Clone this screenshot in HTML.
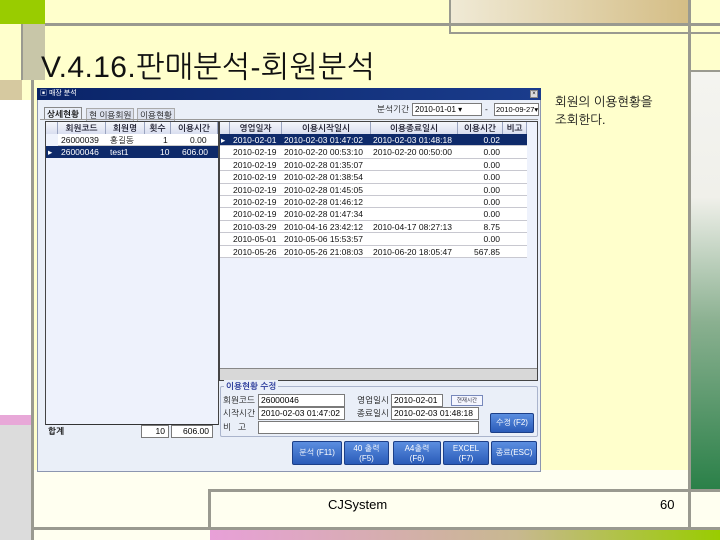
<!DOCTYPE html>
<html><head><meta charset="utf-8"><style>
*{margin:0;padding:0;box-sizing:border-box}
body{width:720px;height:540px;position:relative;overflow:hidden;background:#ffffcc;font-family:"Liberation Sans","Noto Sans CJK KR",sans-serif}
.a{position:absolute}
.k{font-family:"Liberation Sans","NanumGothic","Noto Sans CJK KR",sans-serif}
.t{font-size:8.5px;white-space:nowrap;line-height:12px;color:#111}
.hd{background:linear-gradient(#f4f6fc,#d9def0);border-right:1px solid #9aa4c0;text-align:center;font-weight:bold;color:#223}
.btn{position:absolute;top:441px;height:24px;background:linear-gradient(#5b8ee0,#2a5bb8);border:1px solid #1c3f88;border-radius:2px;color:#fff;font-size:8px;text-align:center;line-height:10px;padding-top:2px}
.inp{position:absolute;background:#fff;border:1px solid #7a7a7a;font-size:8.5px;line-height:11px;padding-left:2px;height:13px;white-space:nowrap;overflow:hidden}
</style></head><body>
<div class="a" style="left:0;top:0;width:720px;height:24px;background:#ffffcc"></div>
<div class="a" style="left:0;top:0;width:45px;height:24px;background:#99cc00"></div>
<div class="a" style="left:450px;top:0;width:240px;height:24px;background:linear-gradient(90deg,#f0ead6,#d4bd85)"></div>
<div class="a" style="left:22px;top:24px;width:23px;height:56px;background:#c8c6a8"></div>
<div class="a" style="left:0;top:80px;width:22px;height:20px;background:#d6c9a0"></div>
<div class="a" style="left:45px;top:23px;width:675px;height:3px;background:#9a9a90"></div>
<div class="a" style="left:449px;top:0;width:2px;height:34px;background:#9a9a90"></div>
<div class="a" style="left:450px;top:32px;width:270px;height:2px;background:#9a9a90"></div>
<div class="a" style="left:21px;top:24px;width:2px;height:56px;background:#9a9a90"></div>
<div class="a" style="left:0;top:100px;width:31px;height:315px;background:#fff"></div>
<div class="a" style="left:0;top:415px;width:31px;height:10px;background:#e8a8d8"></div>
<div class="a" style="left:0;top:425px;width:31px;height:115px;background:#dcdcdc"></div>
<div class="a" style="left:31px;top:80px;width:3px;height:460px;background:#9a9a90"></div>
<div class="a" style="left:688px;top:0;width:3px;height:540px;background:#9a9a90"></div>
<div class="a" style="left:691px;top:72px;width:29px;height:418px;background:linear-gradient(#f4f4f0 0%,#f0f0ea 30%,#8ab090 60%,#2a8048 100%)"></div>
<div class="a" style="left:691px;top:70px;width:29px;height:2px;background:#9a9a90"></div>
<div class="a" style="left:34px;top:470px;width:654px;height:60px;background:#fffff0"></div>
<div class="a" style="left:691px;top:490px;width:29px;height:40px;background:#fffff0"></div>
<div class="a" style="left:209px;top:489px;width:511px;height:3px;background:#9a9a90"></div>
<div class="a" style="left:208px;top:489px;width:3px;height:40px;background:#9a9a90"></div>
<div class="a" style="left:34px;top:527px;width:686px;height:3px;background:#9a9a90"></div>
<div class="a" style="left:210px;top:530px;width:510px;height:10px;background:linear-gradient(90deg,#e8a0d8,#c8b890 60%,#99cc00)"></div>
<div class="a" style="left:34px;top:530px;width:176px;height:10px;background:#fffff0"></div>
<div class="a" style="left:328px;top:497px;font-size:13px">CJSystem</div>
<div class="a" style="left:660px;top:497px;font-size:13px">60</div>
<div class="a k" style="left:41px;top:51px;font-size:30px;line-height:34px;color:#111;letter-spacing:0.4px">V.4.16.판매분석-회원분석</div>
<div class="a k" style="left:555px;top:93px;font-size:12.5px;line-height:18px;color:#111">회원의 이용현황을<br>조회한다.</div>
<div class="a" style="left:37px;top:88px;width:504px;height:384px;background:#eaeff8;border:1px solid #8c96b0"></div>
<div class="a" style="left:37px;top:88px;width:504px;height:12px;background:linear-gradient(90deg,#0a2468,#1a3c8c)"></div>
<div class="a t" style="left:40px;top:88px;color:#fff;font-size:7px;line-height:12px">▣ 매장 분석</div>
<div class="a" style="left:530px;top:90px;width:8px;height:8px;background:#ddd;border:1px solid #888;font-size:6px;line-height:6px;text-align:center">×</div>
<div class="a t k" style="left:44px;top:107px;font-weight:bold;background:#eaeff8;border:1px solid #888;border-bottom:none;padding:0 2px">상세현황</div>
<div class="a t k" style="left:86px;top:108px;background:#dde2ee;border:1px solid #aaa;padding:0 2px">현 이용회원</div>
<div class="a t k" style="left:137px;top:108px;background:#dde2ee;border:1px solid #aaa;padding:0 2px">이용현황</div>
<div class="a" style="left:40px;top:119px;width:498px;height:1px;background:#999"></div>
<div class="a t k" style="left:377px;top:103px">분석기간</div>
<div class="inp" style="left:412px;top:103px;width:70px;font-size:8px">2010-01-01 ▾</div>
<div class="a t" style="left:485px;top:103px">-</div>
<div class="inp" style="left:494px;top:103px;width:45px;font-size:7.5px;padding-left:1px">2010-09-27▾</div>
<div class="a" style="left:45px;top:121px;width:174px;height:304px;background:#eef2fc;border:1px solid #444"></div>
<div class="a t k hd" style="left:46px;top:122px;width:12px;height:12px"></div>
<div class="a t k hd" style="left:58px;top:122px;width:48px;height:12px">회원코드</div>
<div class="a t k hd" style="left:106px;top:122px;width:39px;height:12px">회원명</div>
<div class="a t k hd" style="left:145px;top:122px;width:26px;height:12px">횟수</div>
<div class="a t k hd" style="left:171px;top:122px;width:47px;height:12px">이용시간</div>
<div class="a" style="left:58px;top:134px;width:160px;height:12px;background:#fff;border-bottom:1px solid #ccc"></div>
<div class="a t k" style="left:61px;top:134px">26000039</div><div class="a t k" style="left:110px;top:134px">홍길동</div><div class="a t" style="left:163px;top:134px">1</div><div class="a t" style="left:190px;top:134px">0.00</div>
<div class="a" style="left:46px;top:146px;width:172px;height:12px;background:#0e2a6a"></div>
<div class="a t" style="left:48px;top:146px;color:#fff">▸</div><div class="a t" style="left:61px;top:146px;color:#fff">26000046</div><div class="a t" style="left:110px;top:146px;color:#fff">test1</div><div class="a t" style="left:160px;top:146px;color:#fff">10</div><div class="a t" style="left:182px;top:146px;color:#fff">606.00</div>
<div class="a" style="left:46px;top:424px;width:172px;height:1px;background:#333"></div>
<div class="a t k" style="left:48px;top:425px;font-weight:bold">합계</div>
<div class="inp" style="left:141px;top:425px;width:28px;text-align:right;padding-right:3px">10</div>
<div class="inp" style="left:171px;top:425px;width:42px;text-align:right;padding-right:3px">606.00</div>
<div class="a" style="left:219px;top:121px;width:319px;height:260px;background:#eef2fc;border:1px solid #444"></div>
<div class="a t k hd" style="left:220px;top:122px;width:10px;height:12px"></div>
<div class="a t k hd" style="left:230px;top:122px;width:52px;height:12px">영업일자</div>
<div class="a t k hd" style="left:282px;top:122px;width:89px;height:12px">이용시작일시</div>
<div class="a t k hd" style="left:371px;top:122px;width:87px;height:12px">이용종료일시</div>
<div class="a t k hd" style="left:458px;top:122px;width:45px;height:12px">이용시간</div>
<div class="a t k hd" style="left:503px;top:122px;width:24px;height:12px">비고</div>
<div id="rows"></div>
<div class="a" style="left:220px;top:368px;width:317px;height:12px;background:#d8d8d8;border-top:1px solid #888"></div>
<div class="a" style="left:220px;top:386px;width:318px;height:51px;border:1px solid #aab4cc;border-radius:2px"></div>
<div class="a t k" style="left:224px;top:380px;background:#eaeff8;color:#2a3a9a;font-weight:bold;padding:0 2px">이용현황 수정</div>
<div class="a t k" style="left:223px;top:394px">회원코드</div>
<div class="inp" style="left:258px;top:394px;width:87px">26000046</div>
<div class="a t k" style="left:357px;top:394px">영업일시</div>
<div class="inp" style="left:391px;top:394px;width:52px">2010-02-01</div>
<div class="a" style="left:451px;top:395px;width:32px;height:11px;border:1px solid #7788bb;background:#f4f6ff;font-size:5.5px;text-align:center;line-height:10px;color:#334">현재시간</div>
<div class="a t k" style="left:223px;top:407px">시작시간</div>
<div class="inp" style="left:258px;top:407px;width:87px">2010-02-03 01:47:02</div>
<div class="a t k" style="left:357px;top:407px">종료일시</div>
<div class="inp" style="left:391px;top:407px;width:88px">2010-02-03 01:48:18</div>
<div class="a t k" style="left:223px;top:421px">비&nbsp;&nbsp;&nbsp;고</div>
<div class="inp" style="left:258px;top:421px;width:221px"></div>
<div class="btn k" style="left:490px;top:413px;width:44px;height:20px;line-height:14px">수정 (F2)</div>
<div class="btn k" style="left:292px;width:50px;line-height:18px">분석 (F11)</div>
<div class="btn k" style="left:344px;width:45px">40 출력<br>(F5)</div>
<div class="btn k" style="left:393px;width:48px">A4출력<br>(F6)</div>
<div class="btn k" style="left:443px;width:46px">EXCEL<br>(F7)</div>
<div class="btn k" style="left:491px;width:46px;line-height:18px">종료(ESC)</div>
<script>
var d=[["2010-02-01","2010-02-03 01:47:02","2010-02-03 01:48:18","0.02"],["2010-02-19","2010-02-20 00:53:10","2010-02-20 00:50:00","0.00"],["2010-02-19","2010-02-28 01:35:07","","0.00"],["2010-02-19","2010-02-28 01:38:54","","0.00"],["2010-02-19","2010-02-28 01:45:05","","0.00"],["2010-02-19","2010-02-28 01:46:12","","0.00"],["2010-02-19","2010-02-28 01:47:34","","0.00"],["2010-03-29","2010-04-16 23:42:12","2010-04-17 08:27:13","8.75"],["2010-05-01","2010-05-06 15:53:57","","0.00"],["2010-05-26","2010-05-26 21:08:03","2010-06-20 18:05:47","567.85"]];
var h="";for(var i=0;i<d.length;i++){var y=134+i*12.4,s=i==0,c=s?"color:#fff;":"";
h+='<div class="a" style="left:220px;top:'+y+'px;width:307px;height:12.4px;background:'+(s?'#0e2a6a':'#fff')+';border-bottom:1px solid #c8c8d0"></div>';
if(s)h+='<div class="a t" style="left:221px;top:'+y+'px;color:#fff">▸</div>';
h+='<div class="a t" style="left:233px;top:'+y+'px;'+c+'">'+d[i][0]+'</div><div class="a t" style="left:284px;top:'+y+'px;'+c+'">'+d[i][1]+'</div><div class="a t" style="left:373px;top:'+y+'px;'+c+'">'+d[i][2]+'</div><div class="a t" style="left:458px;width:42px;text-align:right;top:'+y+'px;'+c+'">'+d[i][3]+'</div>';}
document.getElementById("rows").outerHTML=h;
</script>
</body></html>
